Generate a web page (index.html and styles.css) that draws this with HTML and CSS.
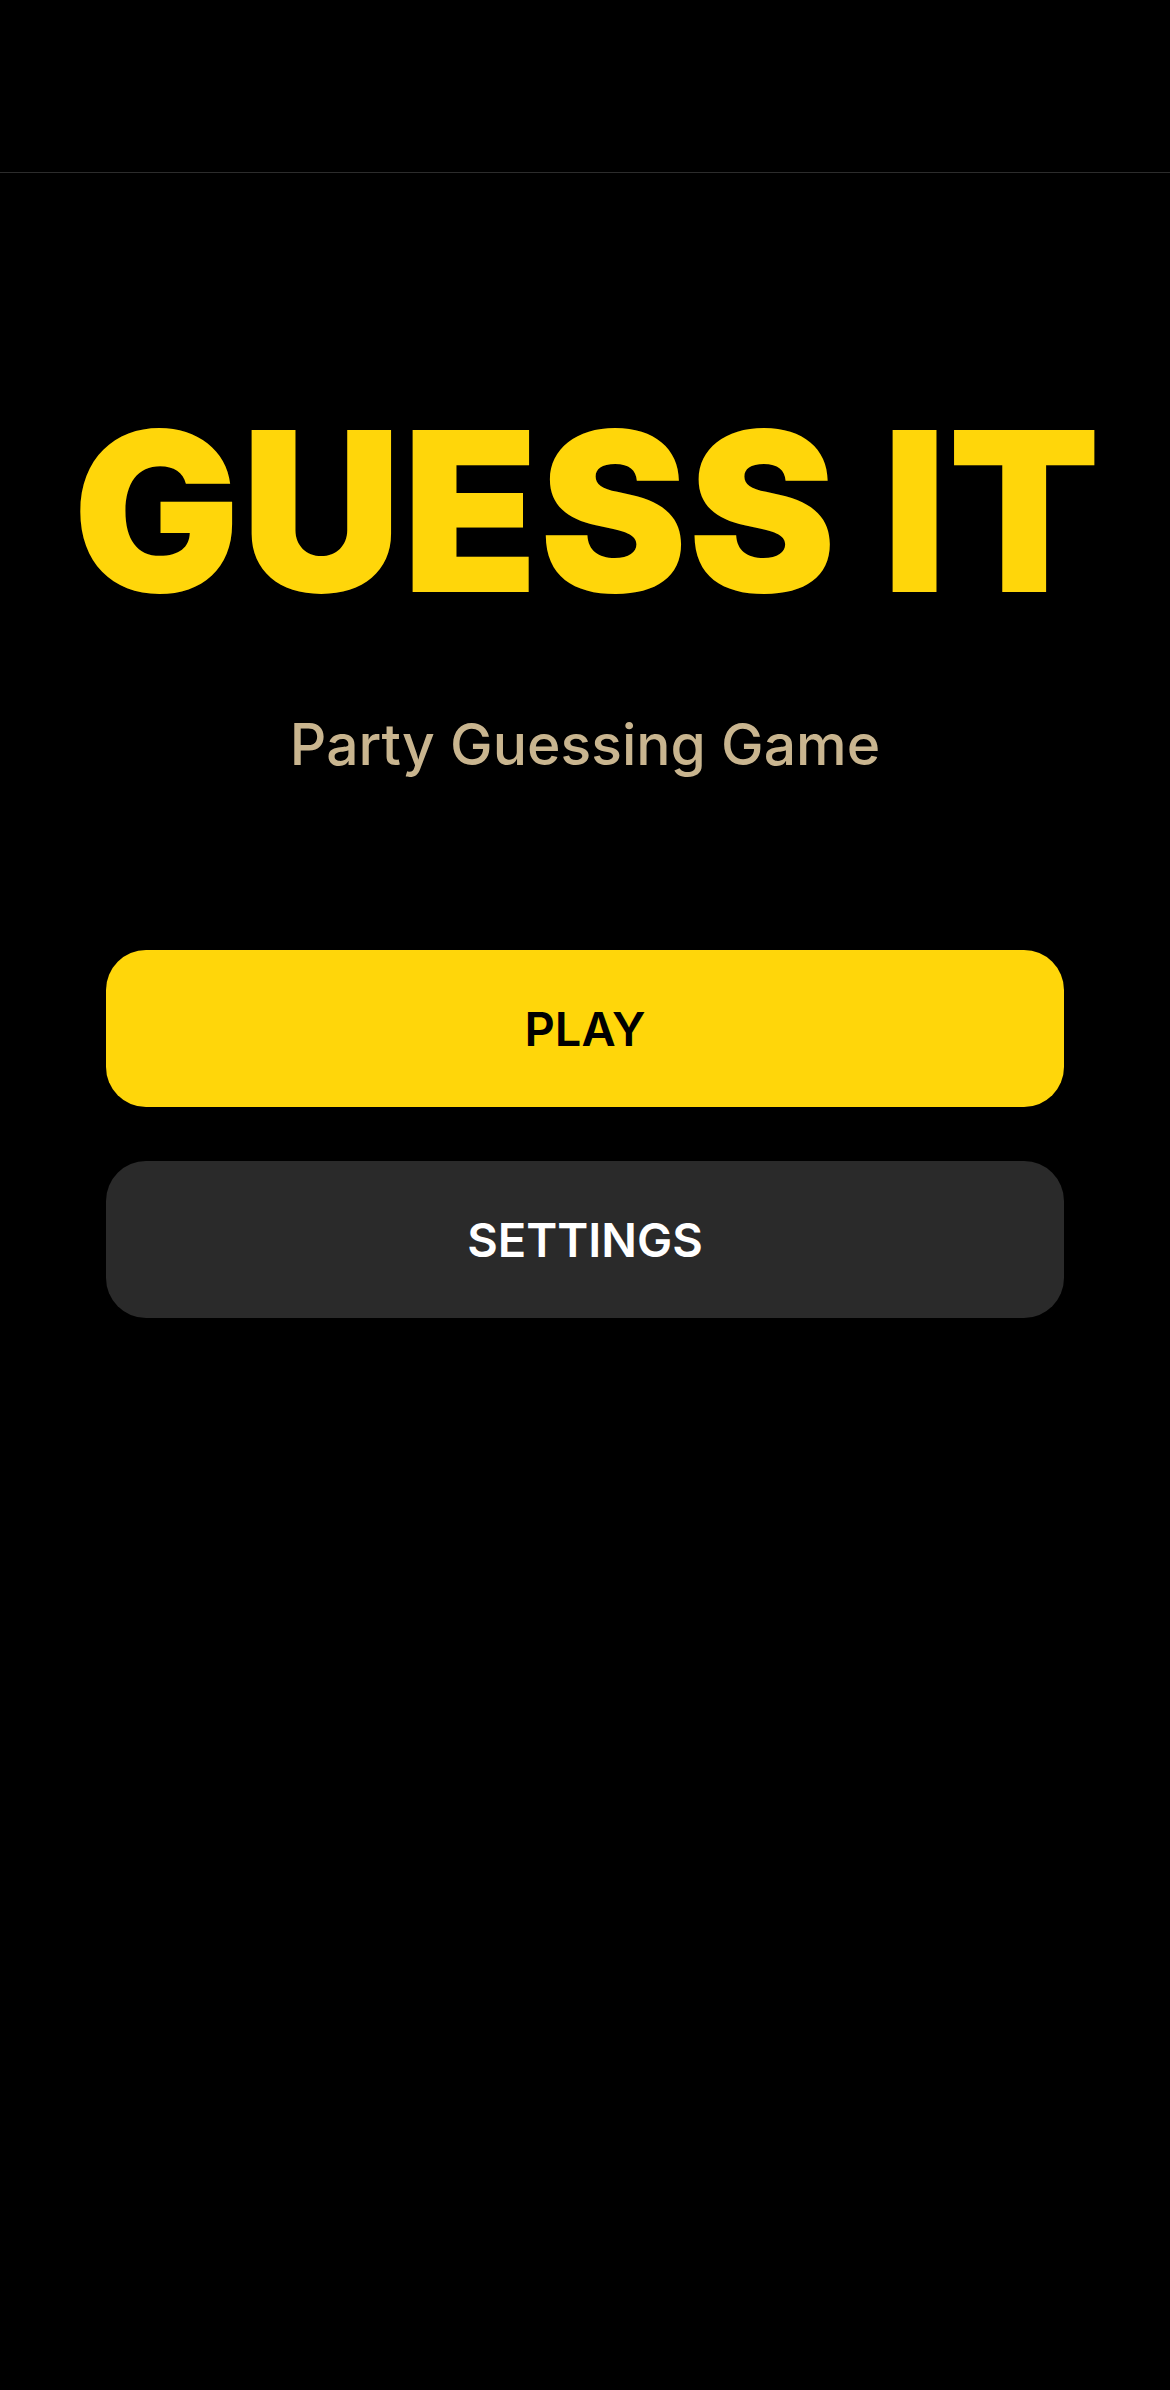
FILE: index.html
```html
<!DOCTYPE html>
<html>

<head>
    <title>Guess It</title>
    <link rel="stylesheet" href="styles.css">
</head>

<body>
    <div class="top_bar"></div>
    <div class="container">
        <div class="title">GUESS IT</div>
        <div class="subtitle">Party Guessing Game</div>
        <div class="menu">
            <button class="btn play_btn">PLAY</button>
            <button class="btn settings_btn">SETTINGS</button>
        </div>
    </div>
</body>

</html>
```

FILE: styles.css
```css
body {
    margin: 0;
    background-color: #000000;
    font-family: 'Inter', 'Noto Sans', sans-serif;
    min-height: 2390px;
}

.top_bar {
    height: 172px;
    border-bottom: 1px solid #2c2c2c;
}

.container {
    display: flex;
    flex-direction: column;
    align-items: center;
    padding: 0 106px;
}

.title {
    margin-top: 228px;
    padding-left: 4px;
    font-size: 222px;
    line-height: 1;
    font-weight: 900;
    letter-spacing: 1px;
    color: #ffd60a;
    white-space: nowrap;
}

.subtitle {
    margin-top: 93px;
    font-size: 57px;
    line-height: 1;
    font-weight: 500;
    color: #c9b58f;
}

.menu {
    margin-top: 177px;
    width: 100%;
    display: flex;
    flex-direction: column;
    gap: 54px;
}

.btn {
    height: 157px;
    width: 100%;
    border: 0;
    border-radius: 40px;
    font-family: 'Inter', 'Noto Sans', sans-serif;
    font-size: 47px;
    font-weight: 600;
}

.play_btn {
    background-color: #ffd60a;
    color: #000000;
}

.settings_btn {
    background-color: #2a2a2a;
    color: #ffffff;
}
```
